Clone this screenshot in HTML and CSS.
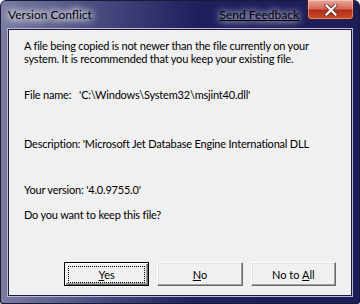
FILE: index.html
```html
<!DOCTYPE html>
<html lang="en">
<head>
    <meta charset="UTF-8">
    <title>Version Conflict</title>
    <link rel="stylesheet" href="styles.css">
</head>
<body>

    <div class="window">
        <div class="titlebar">
            <span class="title">Version Conflict</span>
            <a class="feedback" href="#">Send Feedback</a>
            <div class="close">
                <svg width="14" height="12" viewBox="0 0 14 12">
                    <path d="M2.5 1.5 L11.5 10.5 M11.5 1.5 L2.5 10.5" stroke="#6a2a24" stroke-width="4" stroke-linecap="square" fill="none"/>
                    <path d="M2.5 1.5 L11.5 10.5 M11.5 1.5 L2.5 10.5" stroke="#ffffff" stroke-width="2.2" stroke-linecap="square" fill="none"/>
                </svg>
            </div>
        </div>

        <div class="client">
            <p class="intro">A file being copied is not newer than the file currently on your<br>system. It is recommended that you keep your existing file.</p>
            <p class="row filename">File name:&nbsp;&nbsp;&nbsp;'C:\Windows\System32\msjint40.dll'</p>
            <p class="row description">Description:&nbsp;'Microsoft Jet Database Engine International DLL</p>
            <p class="row version">Your version:&nbsp;'4.0.9755.0'</p>
            <p class="row question">Do you want to keep this file?</p>

            <div class="buttons">
                <button class="btn default"><span class="focus"><u>Y</u>es</span></button>
                <button class="btn"><u>N</u>o</button>
                <button class="btn">No to <u>A</u>ll</button>
            </div>
        </div>
    </div>

</body>
</html>
```

FILE: styles.css
```css
body {
    margin: 0;
    font-family: Lato, "Noto Sans", sans-serif;
    font-size: 11px;
    color: #000;
}
.window {
    width: 360px;
    height: 304px;
    box-sizing: border-box;
    border: 1px solid #1a1a34;
    border-radius: 6px 6px 2px 2px;
    background: linear-gradient(90deg, #7a7ca2 0%, #44467c 30%, #1e1f5c 55%, #1c1d58 100%);
    padding: 0 7px 7px 7px;
    display: flex;
    flex-direction: column;
}
.titlebar {
    height: 27px;
    display: flex;
    align-items: flex-start;
    position: relative;
}
.title {
    margin-top: 6px;
    padding: 0 6px 0 0;
    font-size: 12px;
    color: #000;
    text-shadow: 0 0 6px #fff, 0 0 8px #fff, 0 0 10px #fff;
}
.feedback {
    margin: 6px 53px 0 auto;
    color: #000;
    font-size: 12px;
    text-decoration: underline;
    text-shadow: 0 0 6px #d8d8ec, 0 0 10px #d8d8ec;
}
.close {
    position: absolute;
    right: -2px;
    top: -1px;
    width: 45px;
    height: 19px;
    border: 1px solid #4a1a18;
    border-top: none;
    border-radius: 0 0 4px 4px;
    background: linear-gradient(180deg, #e8a89a 0%, #d46a58 45%, #b42c18 55%, #c8502c 100%);
    display: flex;
    align-items: center;
    justify-content: center;
    box-shadow: inset 0 0 0 1px rgba(255, 255, 255, 0.35);
}
.client {
    flex: 1;
    background: #f0f0f0;
    border: 1px solid #1a1a3c;
    box-shadow: 0 0 0 1px #b8b8d0;
    padding: 0 15px;
    display: flex;
    flex-direction: column;
    margin-top: 1px;
}
p {
    margin: 0;
    line-height: 13px;
    white-space: nowrap;
    letter-spacing: -0.2px;
}
.intro {
    margin-top: 9px;
}
.filename {
    margin-top: 23px;
}
.description {
    margin-top: 36px;
}
.version {
    margin-top: 33px;
}
.question {
    margin-top: 12px;
}
.buttons {
    margin-top: auto;
    margin-bottom: 9px;
    display: flex;
    gap: 8px;
    padding-left: 40px;
}
.btn {
    width: 88px;
    height: 24px;
    font-family: inherit;
    font-size: 11px;
    color: #000;
    background: #f0f0f0;
    border: 1px solid;
    border-color: #ffffff #696969 #696969 #ffffff;
    box-shadow: inset -1px -1px 0 #a0a0a0, inset 1px 1px 0 #e3e3e3;
    padding: 0;
}
.default {
    border-color: #000;
    box-shadow: inset 1px 1px 0 #fff, inset -1px -1px 0 #696969, inset -2px -2px 0 #a0a0a0;
}
.focus {
    display: block;
    margin: 0 3px;
    height: 15px;
    line-height: 15px;
    border: 1px dotted #000;
}
```
